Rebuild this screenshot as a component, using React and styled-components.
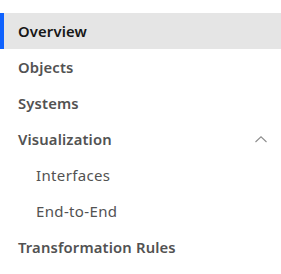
import React, { useState } from 'react'
import styled, { createGlobalStyle } from 'styled-components'

const GlobalStyle = createGlobalStyle`
  html, body {
    margin: 0;
    padding: 0;
    background: #fff;
  }
  body {
    font-family: "Noto Sans", "Open Sans", sans-serif;
  }
`

const Nav = styled.nav`
  width: 281px;
  padding-top: 13px;
  display: flex;
  flex-direction: column;
`

const Item = styled.a`
  display: flex;
  align-items: center;
  justify-content: space-between;
  height: 36px;
  padding-left: ${(p) => (p.$sub ? '36px' : '18px')};
  padding-right: 14px;
  box-sizing: border-box;
  font-size: ${(p) => (p.$sub ? '15px' : '14.8px')};
  font-weight: ${(p) => (p.$sub ? 400 : 600)};
  letter-spacing: ${(p) => (p.$sub ? '0.35px' : '0.15px')};
  color: ${(p) => (p.$active ? '#161616' : '#525252')};
  background: ${(p) => (p.$active ? '#e5e5e5' : 'transparent')};
  box-shadow: ${(p) => (p.$active ? 'inset 4px 0 0 #0f62fe' : 'none')};
  cursor: pointer;
  text-decoration: none;
`

const Chevron = () => (
  <svg width="12" height="7" viewBox="0 0 12 7">
    <path d="M0.5 6 L6 0.8 L11.5 6" fill="none" stroke="#8d8d8d" strokeWidth="1.1" />
  </svg>
)

const items = [
  { label: 'Overview', active: true },
  { label: 'Objects' },
  { label: 'Systems' },
  { label: 'Visualization', menu: true },
  { label: 'Interfaces', sub: true },
  { label: 'End-to-End', sub: true },
  { label: 'Transformation Rules' },
]

export default function App() {
  const [active, setActive] = useState('Overview')
  return (
    <>
      <GlobalStyle />
      <Nav>
        {items.map((it) => (
          <Item
            key={it.label}
            $sub={it.sub}
            $active={active === it.label}
            onClick={() => setActive(it.label)}
          >
            <span>{it.label}</span>
            {it.menu && <Chevron />}
          </Item>
        ))}
      </Nav>
    </>
  )
}
